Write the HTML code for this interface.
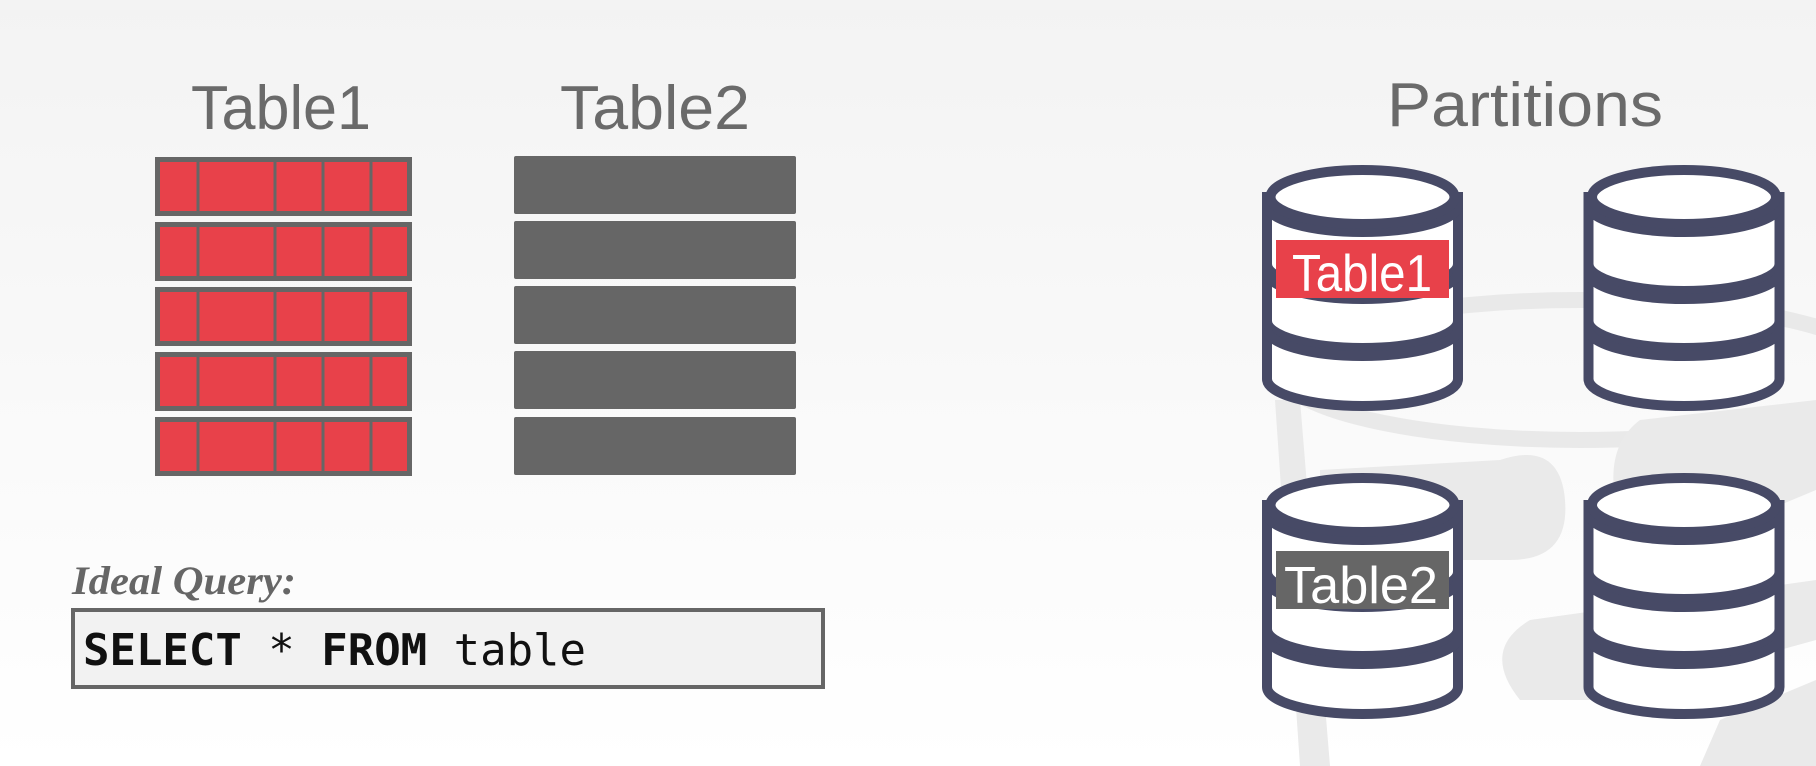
<!DOCTYPE html>
<html><head><meta charset="utf-8"><style>
html,body{margin:0;padding:0;width:1816px;height:766px;overflow:hidden;background:linear-gradient(#f3f3f3,#ffffff);}
svg{display:block}
</style></head><body>
<svg width="1816" height="766" viewBox="0 0 1816 766" xmlns="http://www.w3.org/2000/svg">
<defs>
<linearGradient id="bg" x1="0" y1="0" x2="0" y2="1"><stop offset="0" stop-color="#f3f3f3"/><stop offset="1" stop-color="#ffffff"/></linearGradient>
<g id="cyl" fill="none" stroke="#474a66" stroke-width="10">
  <path d="M-95.5,32 L-95.5,214 A95.5,27 0 0 0 95.5,214 L95.5,32 Z" fill="#fff"/>
  <path d="M-95.5,40 A95.5,27 0 0 0 95.5,40"/>
  <path d="M-95.5,99 A95.5,27 0 0 0 95.5,99"/>
  <path d="M-95.5,107 A95.5,27 0 0 0 95.5,107"/>
  <path d="M-95.5,156 A95.5,27 0 0 0 95.5,156"/>
  <path d="M-95.5,164 A95.5,27 0 0 0 95.5,164"/>
  <ellipse cx="0" cy="32" rx="92" ry="27" fill="#fff"/>
</g>
</defs>
<rect width="1816" height="766" fill="url(#bg)"/>
<!-- watermark -->
<g fill="none" stroke="#e9e9e9" stroke-width="16">
  <ellipse cx="1580" cy="370" rx="300" ry="70"/>
</g>
<g fill="#eaeaea">
  <path d="M1275,400 L1300,400 L1330,766 L1300,766 Z"/>
  <path d="M1500,460 Q1560,440 1565,500 Q1570,560 1510,560 L1320,560 L1320,470 Z"/>
  <path d="M1640,420 Q1600,450 1620,520 Q1650,560 1720,530 L1816,490 L1816,400 Z"/>
  <path d="M1530,620 Q1480,650 1520,700 L1600,700 L1816,640 L1816,580 Z"/>
  <path d="M1720,720 L1816,680 L1816,766 L1700,766 Z"/>
</g>

<!-- titles -->
<g font-family="Liberation Sans, sans-serif" fill="#6a6a6a">
  <text x="191" y="129" font-size="62" textLength="180" lengthAdjust="spacingAndGlyphs">Table1</text>
  <text x="560" y="129" font-size="62" textLength="190" lengthAdjust="spacingAndGlyphs">Table2</text>
  <text x="1387" y="126" font-size="62" textLength="276" lengthAdjust="spacingAndGlyphs">Partitions</text>
</g>

<!-- Table1 red rows -->
<g fill="#e8414a" stroke="#666" stroke-width="5">
  <rect x="157.5" y="159.5" width="252" height="54"/>
  <rect x="157.5" y="224.5" width="252" height="54"/>
  <rect x="157.5" y="289.5" width="252" height="54"/>
  <rect x="157.5" y="354.5" width="252" height="54"/>
  <rect x="157.5" y="419.5" width="252" height="54"/>
</g>
<g stroke="#666" stroke-width="3">
  <path d="M198,159V214M275,159V214M323,159V214M371,159V214"/>
  <path d="M198,224V279M275,224V279M323,224V279M371,224V279"/>
  <path d="M198,289V344M275,289V344M323,289V344M371,289V344"/>
  <path d="M198,354V409M275,354V409M323,354V409M371,354V409"/>
  <path d="M198,419V474M275,419V474M323,419V474M371,419V474"/>
</g>
<!-- Table2 gray rows -->
<g fill="#666">
  <rect x="514" y="156" width="282" height="58" rx="2"/>
  <rect x="514" y="221" width="282" height="58" rx="2"/>
  <rect x="514" y="286" width="282" height="58" rx="2"/>
  <rect x="514" y="351" width="282" height="58" rx="2"/>
  <rect x="514" y="417" width="282" height="58" rx="2"/>
</g>

<!-- Ideal query -->
<text x="72" y="594" font-family="Liberation Serif, serif" font-style="italic" font-weight="bold" font-size="40" fill="#666" textLength="224" lengthAdjust="spacingAndGlyphs">Ideal Query:</text>
<rect x="73" y="610" width="750" height="77" fill="#f2f2f2" stroke="#666" stroke-width="4"/>
<text x="83" y="665" font-family="DejaVu Sans Mono, Liberation Mono, monospace" font-size="44" fill="#111" textLength="503" lengthAdjust="spacingAndGlyphs"><tspan font-weight="bold">SELECT</tspan> * <tspan font-weight="bold">FROM</tspan> table</text>

<!-- cylinders -->
<use href="#cyl" x="1362.5" y="165"/>
<use href="#cyl" x="1684" y="165"/>
<use href="#cyl" x="1362.5" y="473"/>
<use href="#cyl" x="1684" y="473"/>

<rect x="1276" y="240" width="173" height="58" fill="#e8414a"/>
<text x="1292" y="291" font-family="Liberation Sans, sans-serif" font-size="52" fill="#fff" textLength="140" lengthAdjust="spacingAndGlyphs">Table1</text>
<rect x="1276" y="551" width="173" height="58" fill="#666"/>
<text x="1284" y="603" font-family="Liberation Sans, sans-serif" font-size="52" fill="#fff" textLength="154" lengthAdjust="spacingAndGlyphs">Table2</text>
</svg>
</body></html>
